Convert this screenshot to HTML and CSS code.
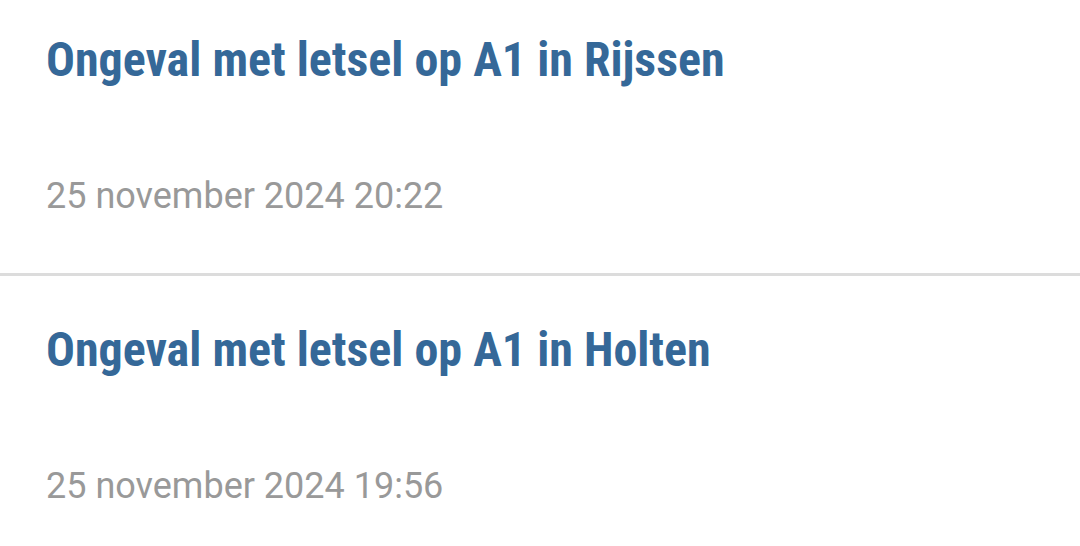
FILE: index.html
```html
<!DOCTYPE html>
<html lang="nl">
<head>
  <meta charset="UTF-8">
  <title>Nieuws</title>
  <link rel="stylesheet" href="styles.css">
</head>
<body>

<ul class="news-list">
  <li class="news-item">
    <h2 class="news-title">Ongeval met letsel op A1 in Rijssen</h2>
    <div class="news-date">25 november 2024 20:22</div>
  </li>
  <li class="news-item">
    <h2 class="news-title">Ongeval met letsel op A1 in Holten</h2>
    <div class="news-date">25 november 2024 19:56</div>
  </li>
</ul>

</body>
</html>
```

FILE: styles.css
```css
body {
  margin: 0;
  background: #fff;
  font-family: Roboto, "Noto Sans", sans-serif;
}

/* list is scrolled a little past the top */
.news-list {
  list-style: none;
  margin: -14px 0 0;
  padding: 0;
}

.news-item {
  height: 287px;
  padding: 0 46px;
  border-bottom: 3px solid #dcdcdc;
}

.news-title {
  margin: 0;
  padding-top: 44px;
  font-size: 48px;
  line-height: 60px;
  font-weight: 700;
  font-stretch: condensed;
  color: #356898;
  white-space: nowrap;
}

.news-date {
  margin-top: 86px;
  font-size: 36px;
  line-height: 40px;
  color: #999;
}
```
